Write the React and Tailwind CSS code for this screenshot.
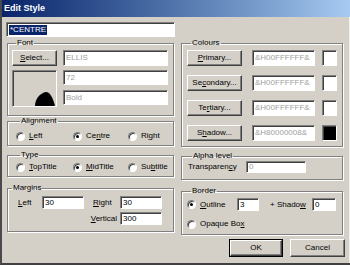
import React from "react";

const sunken =
  "border border-t-[#808080] border-l-[#808080] border-b-white border-r-white shadow-[inset_1px_1px_0_#404040]";
const raised =
  "flex items-center justify-center bg-[#d4d0c8] border border-t-white border-l-white border-b-[#404040] border-r-[#404040] shadow-[inset_-1px_-1px_0_#808080] text-black";
const group =
  "border border-[#808080] shadow-[1px_1px_0_#ffffff,inset_1px_1px_0_#ffffff]";

function U({ children }) {
  return <span className="underline underline-offset-[1px]">{children}</span>;
}

function Field({ className = "", children, dim }) {
  return (
    <div
      className={`bg-white ${sunken} flex items-center pl-[2px] ${
        dim ? "text-[#a0a0a0]" : "text-black"
      } ${className}`}
    >
      {children}
    </div>
  );
}

function Group({ label, className = "", children }) {
  return (
    <fieldset className={`${group} ${className}`}>
      <legend className="ml-[4px] px-[1px] leading-[10px]">{label}</legend>
      {children}
    </fieldset>
  );
}

function Radio({ checked, children, className = "" }) {
  return (
    <div className={`flex items-center ${className}`}>
      <div
        className={`w-[9px] h-[9px] rounded-full bg-white ${sunken} flex items-center justify-center`}
      >
        {checked && <div className="w-[3px] h-[3px] rounded-full bg-black" />}
      </div>
      <span className="ml-[4px] leading-[10px]">{children}</span>
    </div>
  );
}

export default function App() {
  return (
    <div
      className="w-[350px] h-[265px] bg-[#d4d0c8] text-[8px] text-black overflow-hidden border-l-2 border-l-[#4a4a4a] border-b-2 border-b-[#404040] flex flex-col"
      style={{ fontFamily: '"Liberation Sans", Arial, sans-serif' }}
    >
      <div className="h-[17px] shrink-0 bg-gradient-to-r from-[#0a246a] to-[#a6caf0] flex items-center pl-[2px]">
        <span className="text-white font-bold text-[9px]">Edit Style</span>
      </div>
      <div className="flex flex-1 pl-[4px] pr-[5px] border-r border-r-[#f0f0f0]">
        {/* left column */}
        <div className="w-[169px] flex flex-col">
          <div
            className={`mt-[5px] h-[15px] bg-white ${sunken} flex items-center pl-[2px]`}
          >
            <span className="bg-[#0a246a] text-white leading-[10px] px-[1px]">
              *CENTRE
            </span>
          </div>

          <Group label="Font" className="mt-[1px] ml-[1px] w-[167px] pl-[4px] pr-[4px] pt-[2px] pb-[8px]">
            <div className="grid grid-cols-[45px_105px] gap-x-[6px] gap-y-[4px]">
              <div className={`${raised} h-[16px]`}>
                <span>
                  <U>S</U>elect...
                </span>
              </div>
              <Field dim className="h-[16px]">
                ELLIS
              </Field>
              <div
                className={`${sunken} bg-[#d4d0c8] h-[37px] flex items-end pl-[22px]`}
              >
                <svg width="20" height="14" viewBox="0 0 20 14">
                  <path d="M0,14 C0,7 5,1 11,0 C15,0 18,6 20,14 Z" fill="#000" />
                </svg>
              </div>
              <div className="flex flex-col gap-[5px]">
                <Field dim className="h-[15px]">
                  72
                </Field>
                <Field dim className="h-[15px]">
                  Bold
                </Field>
              </div>
            </div>
          </Group>

          <Group label="Alignment" className="mt-[0px] ml-[1px] w-[167px] pl-[8px] pt-[5px] pb-[4px]">
            <div className="flex h-[10px]">
              <Radio className="w-[57px]">
                <U>L</U>eft
              </Radio>
              <Radio checked className="w-[55px]">
                Ce<U>n</U>tre
              </Radio>
              <Radio>
                Ri<U>g</U>ht
              </Radio>
            </div>
          </Group>

          <Group label="Type" className="mt-[4px] ml-[1px] w-[167px] pl-[8px] pt-[2px] pb-[4px]">
            <div className="flex h-[10px]">
              <Radio className="w-[57px]">
                <U>T</U>opTitle
              </Radio>
              <Radio checked className="w-[55px]">
                <U>M</U>idTitle
              </Radio>
              <Radio>
                Su<U>b</U>title
              </Radio>
            </div>
          </Group>

          <Group label="Margins" className="mt-[6px] ml-[1px] w-[167px] pt-[3px] pb-[6px]">
            <div className="grid grid-cols-[34px_42px_36px_42px] gap-y-[3px] items-center">
              <span className="pl-[10px]">
                <U>L</U>eft
              </span>
              <Field className="h-[13px]">30</Field>
              <span className="pl-[9px]">
                <U>R</U>ight
              </span>
              <Field className="h-[13px]">30</Field>
              <span className="col-start-3 text-right pr-[3px]">
                <U>V</U>ertical
              </span>
              <Field className="h-[13px]">300</Field>
            </div>
          </Group>
        </div>

        {/* right column */}
        <div className="ml-[6px] flex-1 flex flex-col">
          <Group label="Colours" className="mt-[21px] w-[162px] pl-[5px] pt-[2px] pb-[5px]">
            <div className="flex flex-col gap-[9px]">
              {[
                [<><U>P</U>rimary...</>, "&H00FFFFFF&", false],
                [<>Se<U>c</U>ondary...</>, "&H00FFFFFF&", false],
                [<>Te<U>r</U>tiary...</>, "&H00FFFFFF&", false],
                [<>S<U>h</U>adow...</>, "&H80000008&", true],
              ].map(([label, val, black], i) => (
                <div key={i} className="flex items-center h-[16px]">
                  <div className={`${raised} w-[55px] h-[16px]`}>
                    <span>{label}</span>
                  </div>
                  <Field dim className="ml-[10px] w-[63px] h-[16px]">
                    {val}
                  </Field>
                  <div
                    className={`ml-[7px] w-[15px] h-[16px] ${sunken} ${
                      black ? "bg-black" : "bg-white"
                    }`}
                  />
                </div>
              ))}
            </div>
          </Group>

          <Group label="Alpha level" className="mt-[4px] w-[162px] pl-[6px] pt-[0px] pb-[6px]">
            <div className="flex items-center h-[12px]">
              <span className="w-[58px]">
                Transparen<U>c</U>y
              </span>
              <Field dim className="w-[60px] h-[12px]">
                0
              </Field>
            </div>
          </Group>

          <Group label="Border" className="mt-[6px] w-[162px] pl-[5px] pt-[2px] pb-[5px]">
            <div className="flex items-center h-[13px]">
              <Radio checked className="w-[50px]">
                <U>O</U>utline
              </Radio>
              <Field className="w-[22px] h-[13px]">3</Field>
              <span className="ml-[11px] w-[42px]">
                + Shado<U>w</U>
              </span>
              <Field className="w-[24px] h-[13px]">0</Field>
            </div>
            <Radio className="mt-[8px]">
              Opaque Bo<U>x</U>
            </Radio>
          </Group>

          <div className="mt-[4px] flex justify-end gap-[7px] -mr-[1px]">
            <div className="w-[54px] h-[18px] border border-black flex">
              <div className={`${raised} flex-1`}>OK</div>
            </div>
            <div className={`${raised} w-[55px] h-[18px]`}>Cancel</div>
          </div>
        </div>
      </div>
    </div>
  );
}
